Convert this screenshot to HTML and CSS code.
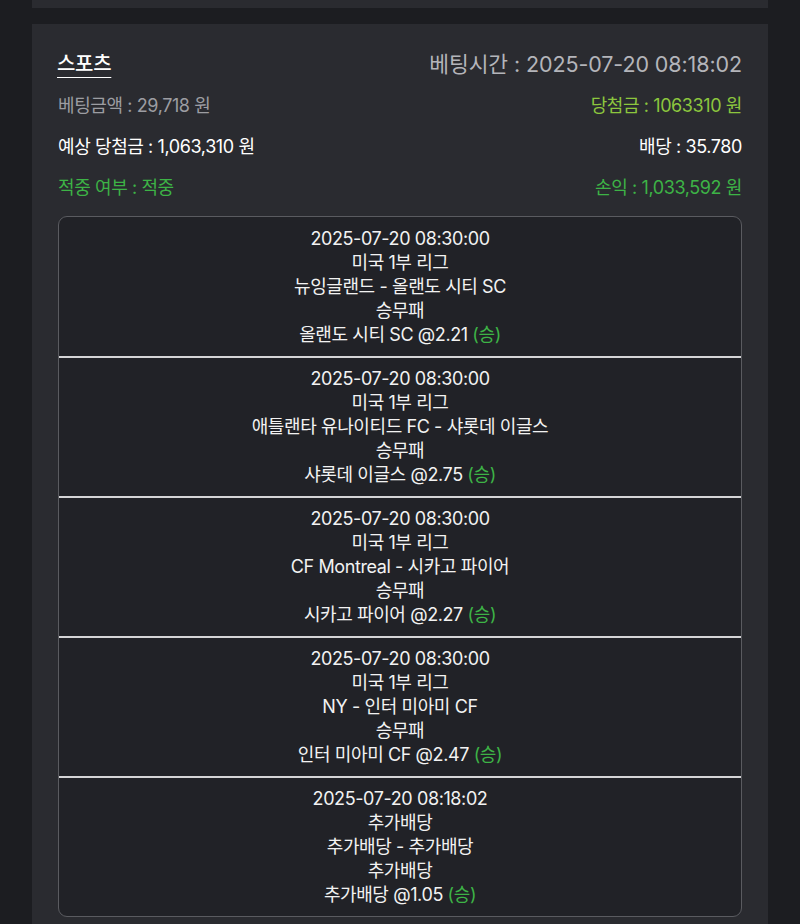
FILE: index.html
```html
<!DOCTYPE html>
<html lang="ko">
<head>
<meta charset="utf-8">
<link rel="stylesheet" href="styles.css">
</head>
<body>
<div class="page">
  <div class="card card-prev"></div>
  <div class="card">
    <div class="info">
      <div class="row head">
        <span class="title">스포츠</span>
        <span class="time">베팅시간 : 2025-07-20 08:18:02</span>
      </div>
      <div class="row">
        <span class="gray">베팅금액 : 29,718 원</span>
        <span class="lime">당첨금 : 1063310 원</span>
      </div>
      <div class="row">
        <span class="white">예상 당첨금 : 1,063,310 원</span>
        <span class="white">배당 : 35.780</span>
      </div>
      <div class="row">
        <span class="green">적중 여부 : 적중</span>
        <span class="green">손익 : 1,033,592 원</span>
      </div>
    </div>
    <div class="games">
      <div class="game">
        <div>2025-07-20 08:30:00</div>
        <div>미국 1부 리그</div>
        <div>뉴잉글랜드 - 올랜도 시티 SC</div>
        <div>승무패</div>
        <div>올랜도 시티 SC @2.21 <span class="win">(승)</span></div>
      </div>
      <div class="game">
        <div>2025-07-20 08:30:00</div>
        <div>미국 1부 리그</div>
        <div>애틀랜타 유나이티드 FC - 샤롯데 이글스</div>
        <div>승무패</div>
        <div>샤롯데 이글스 @2.75 <span class="win">(승)</span></div>
      </div>
      <div class="game">
        <div>2025-07-20 08:30:00</div>
        <div>미국 1부 리그</div>
        <div>CF Montreal - 시카고 파이어</div>
        <div>승무패</div>
        <div>시카고 파이어 @2.27 <span class="win">(승)</span></div>
      </div>
      <div class="game">
        <div>2025-07-20 08:30:00</div>
        <div>미국 1부 리그</div>
        <div>NY - 인터 미아미 CF</div>
        <div>승무패</div>
        <div>인터 미아미 CF @2.47 <span class="win">(승)</span></div>
      </div>
      <div class="game">
        <div>2025-07-20 08:18:02</div>
        <div>추가배당</div>
        <div>추가배당 - 추가배당</div>
        <div>추가배당</div>
        <div>추가배당 @1.05 <span class="win">(승)</span></div>
      </div>
    </div>
  </div>
</div>
</body>
</html>
```
FILE: styles.css
```css
html, body {
  margin: 0;
  padding: 0;
  background: #1c1d21;
}
body {
  font-family: Inter, "Noto Sans CJK KR", sans-serif;
  color: #ffffff;
  height: 924px;
  overflow: hidden;
}
.page {
  padding: 0 32px;
}
.card {
  background: #2a2b30;
  padding: 18px 26px 20px;
}
.card-prev {
  height: 8px;
  padding: 0;
  margin-bottom: 16px;
}
.info {
  margin-bottom: 10px;
}
.row {
  display: flex;
  justify-content: space-between;
  align-items: center;
  height: 41px;
  font-size: 18px;
  letter-spacing: -0.4px;
}
.head {
  font-size: 21.5px;
  letter-spacing: -0.1px;
}
.title {
  font-size: 20px;
  font-weight: 500;
  letter-spacing: -0.3px;
  text-decoration: underline;
  text-underline-offset: 6px;
  text-decoration-thickness: 1px;
  margin-left: -1px;
}
.time {
  color: #b4b5ba;
}
.gray { color: #9c9da2; }
.white { color: #ffffff; }
.lime { color: #8cc63e; }
.green { color: #3db346; }
.games {
  background: #212227;
  border: 1px solid #5a5b60;
  border-radius: 9px;
  overflow: hidden;
}
.game {
  height: 138px;
  display: flex;
  flex-direction: column;
  justify-content: center;
  align-items: center;
  font-size: 18px;
  line-height: 24px;
  letter-spacing: -0.4px;
  color: #f2f2f2;
  border-top: 2px solid #d4d4d6;
}
.game:first-child {
  border-top: none;
  height: 139px;
}
.win { color: #3db346; }
```
